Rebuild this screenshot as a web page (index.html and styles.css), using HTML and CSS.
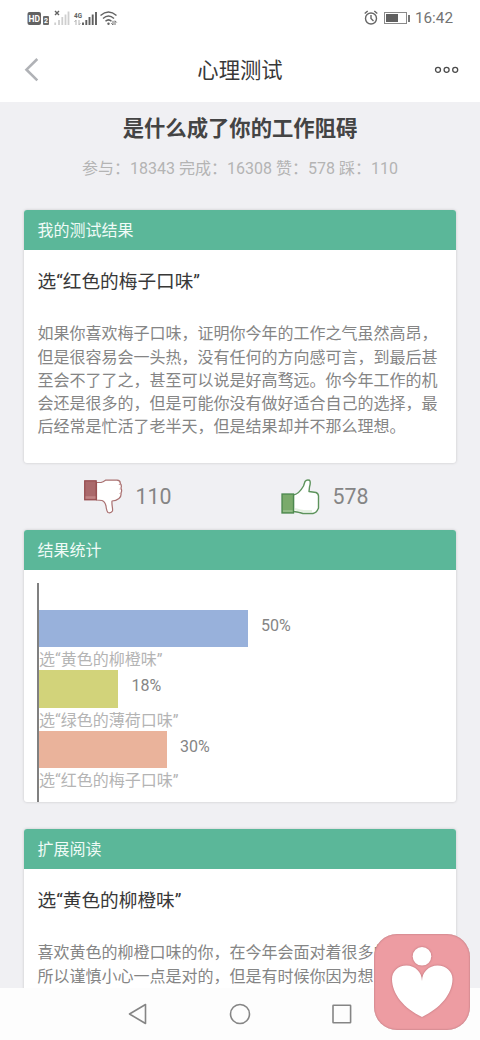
FILE: index.html
```html
<!DOCTYPE html>
<html lang="zh-CN">
<head>
<meta charset="utf-8">
<title>心理测试</title>
<link rel="stylesheet" href="styles.css">
</head>
<body>
<header class="top">
  <div class="status">
    <svg class="status-icons" width="96" height="20" viewBox="0 0 96 20">
      <rect x="0.500" y="4" width="13.500" height="13" rx="2" fill="#626262"/>
      <text x="1.600" y="13.800" class="hd">HD</text>
      <rect x="16" y="8" width="6" height="9" rx="1" fill="#6b6b6b"/>
      <text x="17" y="15.300" class="two">2</text>
      <path d="M28 3l4 4M32 3l-4 4" stroke="#626262" stroke-width="1.400"/>
      <path d="M28.200 14.500V17M32 12V17M35.300 9V17M38.500 6.500V17M41.500 3.500V17" stroke="#cfcfcf" stroke-width="1.800"/>
      <text x="47" y="9.500" class="net" textLength="8" lengthAdjust="spacingAndGlyphs">4G</text>
      <path d="M49 12v5M49 12l-1.500 2M52 12v5M52 17l1.500-2" stroke="#b5b5b5" fill="none"/>
      <path d="M56 14.500V17M59.300 12V17M62.500 9V17M65.700 6.500V17M69 4V17" stroke="#606060" stroke-width="1.900"/>
      <g fill="none" stroke="#646464" stroke-width="1.500"><path d="M73.500 7.500Q81.500 0.500 89.500 7.500"/><path d="M76 10.500Q81.500 5.500 87 10.500"/><path d="M78.500 13.200Q81.500 10.500 84.500 13.200"/></g>
      <circle cx="81.500" cy="15.700" r="1.200" fill="#646464"/>
      <path d="M86 12.800v4.200l-1.700-1.700M88 17v-4.200l1.700 1.700" stroke="#707070" fill="none"/>
    </svg>
    <div class="status-right">
      <svg width="48" height="20" viewBox="0 0 48 20" fill="none" stroke="#666">
        <circle cx="8" cy="10.500" r="5.500" stroke-width="1.400"/>
        <path d="M8 7v3.500l2.500 2.500M1.700 5.500l3-2.500M14.300 5.500l-3-2.500" stroke-width="1.400"/>
        <rect x="21.500" y="4.500" width="22" height="11" stroke="#8a8a8a"/>
        <rect x="23" y="6" width="12" height="8" fill="#606060" stroke="none"/>
        <rect x="45" y="7" width="2" height="7" fill="#777" stroke="none"/>
      </svg>
      <span class="clock">16:42</span>
    </div>
  </div>
  <nav class="bar">
    <svg width="16" height="26" viewBox="0 0 16 26"><path d="M13.300 2L2.500 12.700l10.800 10.700" fill="none" stroke="#b0b2b6" stroke-width="2.600"/></svg>
    <h1 class="bar-title">心理测试</h1>
    <svg width="26" height="10" viewBox="0 0 26 10" fill="none" stroke="#4b4b4b" stroke-width="1.300"><circle cx="4" cy="4.800" r="2.500"/><circle cx="12.600" cy="4.800" r="2.500"/><circle cx="21.200" cy="4.800" r="2.500"/></svg>
  </nav>
</header>
<main class="page">
  <h2 class="headline">是什么成了你的工作阻碍</h2>
  <p class="stats">参与：18343 完成：16308 赞：578 踩：110</p>
  <section class="card result">
    <h3 class="card-head">我的测试结果</h3>
    <h4 class="answer">选“红色的梅子口味”</h4>
    <p class="copy">如果你喜欢梅子口味，证明你今年的工作之气虽然高昂，<br>但是很容易会一头热，没有任何的方向感可言，到最后甚<br>至会不了了之，甚至可以说是好高骛远。你今年工作的机<br>会还是很多的，但是可能你没有做好适合自己的选择，最<br>后经常是忙活了老半天，但是结果却并不那么理想。</p>
  </section>
  <div class="votes">
    <div class="vote">
      <svg width="40" height="38" viewBox="0 0 40 38">
        <path d="M12.500 4.500H17Q19 4 21.500 2.200H33Q36.500 2.500 36.300 5.500Q38 7.500 37 10Q38.300 12.500 37 15Q37.500 18.500 35 20.500Q32 23 28 23C27.500 27 29 30 28.500 33Q27 35.500 24 34.500Q22.500 33 22 28Q21 23.500 18 22.500L12.500 22Z" fill="#fff" stroke="#a97070" stroke-width="1.200" stroke-linejoin="round"/>
        <path d="M36.300 6.500h-1.500M37 11h-1.500M37 15.500h-1.500" stroke="#cfa0a0" fill="none"/>
        <rect x="0.700" y="2.800" width="11.500" height="19" fill="#aa696b" stroke="#94494c" stroke-width="1.200"/>
        <path d="M1.500 19.500h10" stroke="#c08585" stroke-width="2.500"/>
      </svg>
      <span>110</span>
    </div>
    <div class="vote">
      <svg width="40" height="38" viewBox="0 0 40 38">
        <path d="M12.500 17C17 16 20 12.500 22.500 8L24 3.500Q25.500 1.500 28.500 2.300Q30 4 28.500 9L28 13.500L35 14.500Q37.800 15.500 37.500 19V30Q35.500 35 32 35.500H22Q18 34 12.500 33.500Z" fill="#fff" stroke="#5d935c" stroke-width="1.400" stroke-linejoin="round"/>
        <path d="M14 31Q20 33 23 33h8" fill="none" stroke="#e4f0e1" stroke-width="2"/>
        <rect x="1" y="16" width="11.500" height="19" fill="#7aaa6b" stroke="#4c884e" stroke-width="1.300"/>
        <path d="M2 33h9.500" stroke="#92bb86" stroke-width="2"/>
      </svg>
      <span>578</span>
    </div>
  </div>
  <section class="card chart-card">
    <h3 class="card-head">结果统计</h3>
    <div class="chart">
      <div class="row"><div class="track"><div class="fill blue"></div><span class="pct">50%</span></div><p class="label">选“黄色的柳橙味”</p></div>
      <div class="row"><div class="track"><div class="fill lime"></div><span class="pct">18%</span></div><p class="label">选“绿色的薄荷口味”</p></div>
      <div class="row"><div class="track"><div class="fill peach"></div><span class="pct">30%</span></div><p class="label">选“红色的梅子口味”</p></div>
    </div>
  </section>
  <section class="card more">
    <h3 class="card-head">扩展阅读</h3>
    <h4 class="answer">选“黄色的柳橙味”</h4>
    <p class="copy">喜欢黄色的柳橙口味的你，在今年会面对着很多的<br>所以谨慎小心一点是对的，但是有时候你因为想</p>
  </section>
</main>
<footer class="keys">
  <svg width="22" height="24" viewBox="0 0 22 24"><path d="M18.500 2.500V21.500L2.500 12Z"/></svg>
  <svg width="24" height="24" viewBox="0 0 24 24"><circle cx="12" cy="12" r="9.500"/></svg>
  <svg width="22" height="24" viewBox="0 0 22 24"><rect x="2" y="3.200" width="17.600" height="17.600" rx="0.500"/></svg>
</footer>
<div class="float">
  <svg width="96" height="96" viewBox="0 0 96 96"><g fill="#fff"><circle cx="48" cy="22.300" r="9.300"/><path d="M48 47C48 38 41 31.500 32.500 31.500C24 31.500 18 37.500 18 45C18 60 30 74.500 48 83C66 74.500 78.500 60 78.500 45C78.500 37.500 72 31.500 63.500 31.500C55 31.500 48 38 48 47Z"/></g></svg>
</div>
</body>
</html>
```

FILE: styles.css
```css
* { box-sizing: border-box; margin: 0; padding: 0; }
body {
  display: flex;
  flex-direction: column;
  position: relative;
  width: 480px;
  height: 1040px;
  overflow: hidden;
  background: #f0f0f3;
  font-family: Roboto, "Noto Sans CJK SC", sans-serif;
  font-size: 16px;
  font-weight: 400;
  color: #858585;
}
svg { display: block; flex: none; }
h1, h2, h3, h4 { font-weight: 400; }
.top { flex: none; height: 102px; background: #fff; }
.status { display: flex; justify-content: space-between; height: 37px; padding: 8px 27px 0 27px; }
.status-right { display: flex; gap: 4px; }
.clock { font-size: 15.300px; line-height: 21px; color: #737373; }
.hd { font: 700 8.500px Roboto, sans-serif; fill: #fff; }
.two { font: 700 7px Roboto, sans-serif; fill: #fff; }
.net { font: 700 8px Roboto, sans-serif; fill: #606060; }
.bar { display: flex; justify-content: space-between; align-items: center; height: 65px; padding: 0 20px 0 24px; }
.bar-title { font-size: 21.33px; line-height: 32px; color: #383838; padding: 2px 0 0 6px; }
.page { flex: none; height: 886px; overflow: hidden; padding: 11px 24px 0; }
.headline { font-size: 21.33px; line-height: 32px; font-weight: 700; text-align: center; color: #444; }
.stats { margin-top: 12px; line-height: 24px; text-align: center; color: #b4b4b4; white-space: nowrap; }
.card { background: #fff; border-radius: 3px; box-shadow: 0 0 3px rgba(0, 0, 0, .18); overflow: hidden; }
.result { margin-top: 29px; height: 253px; }
.card-head { height: 40px; padding: 1px 0 0 13.500px; line-height: 40px; font-size: 16px; color: #f0fbf7; background: #5bb799; }
.answer { padding: 18px 0 0 13.500px; font-size: 18.67px; line-height: 28px; color: #383838; }
.copy { padding: 26.300px 0 0 13.500px; line-height: 23.2px; white-space: nowrap; }
.votes { display: flex; height: 67px; padding: 15px 0 0 60px; }
.vote { display: flex; flex: none; gap: 11.500px; width: 197px; font-size: 21.33px; line-height: 37px; }
.chart-card { height: 272px; }
.chart { height: 219px; margin: 13px 13px 0; padding-top: 27px; border-left: 2px solid #808080; }
.row { height: 60.400px; }
.track { display: flex; height: 37.300px; gap: 13.500px; }
.pct { line-height: 32px; }
.fill { height: 37.300px; }
.blue { width: 208.500px; background: #98b1db; }
.lime { width: 79px; background: #d2d37a; }
.peach { width: 127.600px; background: #eab39b; }
.label { padding-top: 1px; line-height: 24px; color: #b4b4b4; }
.more { margin-top: 27px; height: 300px; }
.keys { display: flex; flex: none; justify-content: space-between; align-items: center; height: 52px; padding: 0 127px; background: #fdfdfd; }
.keys svg { fill: none; stroke: #858585; stroke-width: 1.600; stroke-linejoin: round; }
.float { position: absolute; left: 374px; top: 934px; width: 96px; height: 96px; border-radius: 23px; background: #ed9ca2; box-shadow: inset 0 0 2px #a96c73; }
.float svg { filter: drop-shadow(0 0 1px #b76d75); }
```
